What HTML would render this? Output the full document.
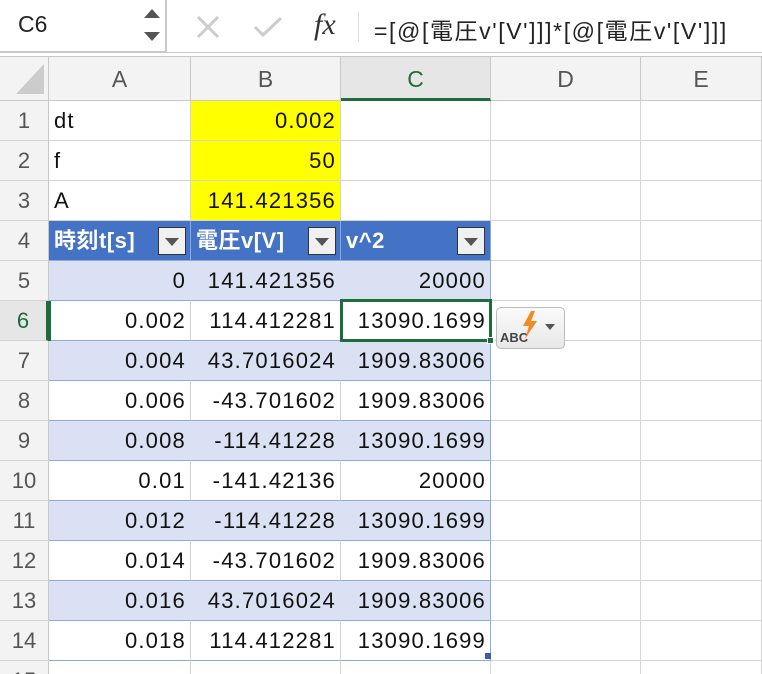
<!DOCTYPE html>
<html><head><meta charset="utf-8"><style>
*{box-sizing:border-box;margin:0;padding:0}
html,body{width:762px;height:674px;overflow:hidden}
body{background:#fff;font-family:"Liberation Sans","Noto Sans CJK JP",sans-serif;position:relative}
.a{position:absolute}
.c{position:absolute;height:40px;border-right:1px solid #d4d4d4;border-bottom:1px solid #d4d4d4;font-size:22px;letter-spacing:1.2px;line-height:40px;padding:0 4px 0 5px;white-space:nowrap;color:#111;overflow:visible}
.r{text-align:right}
.rh{position:absolute;left:0;width:49px;height:40px;border-right:1px solid #c8c8c8;border-bottom:1px solid #d4d4d4;background:#f3f3f3;color:#555;font-size:22px;line-height:40px;text-align:center}
.ch{position:absolute;top:57px;height:44px;border-right:1px solid #c8c8c8;border-bottom:1px solid #c8c8c8;background:#f3f3f3;color:#555;font-size:23px;line-height:44px;text-align:center}
.y{background:#ffff00}
.band{background:#d9e1f2}
.th{background:#4472c4;color:#fff;font-weight:bold;letter-spacing:0.5px}
.dd{position:absolute;top:6px;width:28px;height:28px;background:#f0f0f0;border:1px solid #333}
.dd:after{content:"";position:absolute;left:6px;top:10px;border-left:7px solid transparent;border-right:7px solid transparent;border-top:8px solid #555}
</style></head><body>
<div class="a" style="left:0;top:0;width:167px;height:52px;border-right:2px solid #c8c8c8;border-bottom:1px solid #c8c8c8"></div>
<div class="a" style="left:18px;top:11px;font-size:23px;color:#222">C6</div>
<div class="a" style="left:144px;top:9px;border-left:8px solid transparent;border-right:8px solid transparent;border-bottom:9px solid #555"></div>
<div class="a" style="left:144px;top:32px;border-left:8px solid transparent;border-right:8px solid transparent;border-top:9px solid #555"></div>
<svg class="a" style="left:195px;top:14px" width="30" height="26"><path d="M3 3L23 23M23 3L3 23" stroke="#ccc" stroke-width="3"/></svg>
<svg class="a" style="left:252px;top:14px" width="32" height="26"><path d="M3 13L11 21L29 4" stroke="#ccc" stroke-width="3" fill="none"/></svg>
<div class="a" style="left:314px;top:8px;font-family:'Liberation Serif',serif;font-style:italic;font-size:30px;color:#333">fx</div>
<div class="a" style="left:358px;top:12px;width:1px;height:30px;background:#ddd"></div>
<div class="a" style="left:374px;top:12px;font-size:23px;letter-spacing:1.6px;color:#222;white-space:nowrap">=[@[電圧v'[V']]]*[@[電圧v'[V']]]</div>
<div class="a" style="left:0;top:52px;width:762px;height:5px;border-top:1px solid #c8c8c8;border-bottom:1px solid #c8c8c8;background:#fff"></div>
<div class="ch" style="left:0;width:49px"></div>
<svg class="a" style="left:14px;top:62px" width="32" height="34"><path d="M30 2L30 32L2 32Z" fill="#ccc"/></svg>
<div class="ch" style="left:49px;width:142px">A</div>
<div class="ch" style="left:191px;width:150px">B</div>
<div class="ch" style="left:341px;width:150px;background:#e6e6e6;color:#1e6b3c;border-bottom:3px solid #1e6b3c">C</div>
<div class="ch" style="left:491px;width:150px">D</div>
<div class="ch" style="left:641px;width:121px">E</div>
<div id="g"></div>
<script>
var rows=[
["dt","0.002",""],["f","50",""],["A","141.421356",""],
["H","",""],
["0","141.421356","20000"],["0.002","114.412281","13090.1699"],["0.004","43.7016024","1909.83006"],
["0.006","-43.701602","1909.83006"],["0.008","-114.41228","13090.1699"],["0.01","-141.42136","20000"],
["0.012","-114.41228","13090.1699"],["0.014","-43.701602","1909.83006"],["0.016","43.7016024","1909.83006"],
["0.018","114.412281","13090.1699"],["","",""]];
var h="";
for(var i=0;i<15;i++){
 var t=101+40*i,n=i+1,d=rows[i];
 h+='<div class="rh" style="top:'+t+'px;'+(n==6?'color:#1e6b3c;background:#e6e6e6;border-right:3px solid #1e6b3c':'')+'">'+n+'</div>';
 if(n==4){
  h+='<div class="c th" style="left:49px;top:'+t+'px;width:142px;border-color:#8ea9db">時刻t[s]<div class="dd" style="left:109px"></div></div>';
  h+='<div class="c th" style="left:191px;top:'+t+'px;width:150px;border-color:#8ea9db">電圧v[V]<div class="dd" style="left:117px"></div></div>';
  h+='<div class="c th" style="left:341px;top:'+t+'px;width:150px;border-color:#8ea9db">v^2<div class="dd" style="left:116px"></div></div>';
 } else if(n<=3){
  h+='<div class="c" style="left:49px;top:'+t+'px;width:142px">'+d[0]+'</div>';
  h+='<div class="c r y" style="left:191px;top:'+t+'px;width:150px">'+d[1]+'</div>';
  h+='<div class="c r" style="left:341px;top:'+t+'px;width:150px">'+d[2]+'</div>';
 } else {
  var cls=(n>=5&&n<=14&&n%2==1)?' band':'';
  var bcol=(n>=5&&n<=14)?'border-bottom-color:#8ea9db;':'';
  var bcolB=(n>=5&&n<=14&&n%2==1)?'border-right-color:#d9e1f2;':'';
  h+='<div class="c r'+cls+'" style="left:49px;top:'+t+'px;width:142px;'+bcol+bcolB+'">'+d[0]+'</div>';
  h+='<div class="c r'+cls+'" style="left:191px;top:'+t+'px;width:150px;'+bcol+bcolB+'">'+d[1]+'</div>';
  h+='<div class="c r'+cls+'" style="left:341px;top:'+t+'px;width:150px;'+bcol+((n>=5&&n<=14)?'border-right-color:#8ea9db;':'')+'">'+d[2]+'</div>';
 }
 h+='<div class="c" style="left:491px;top:'+t+'px;width:150px"></div>';
 h+='<div class="c" style="left:641px;top:'+t+'px;width:121px"></div>';
}
document.getElementById('g').innerHTML=h;
</script>
<div class="a" style="left:340px;top:299px;width:152px;height:43px;border:3px solid #1e6b3c"></div>
<div class="a" style="left:487px;top:337px;width:7px;height:7px;background:#1e6b3c;border:1px solid #fff"></div>
<div class="a" style="left:48px;top:301px;width:3px;height:40px;background:#1e6b3c"></div>
<div class="a" style="left:485px;top:653px;width:6px;height:6px;background:#3b5bb0"></div>
<div class="a" style="left:496px;top:307px;width:69px;height:42px;border:1px solid #bbb;border-radius:5px;background:linear-gradient(#fafafa,#e8e8e8)"></div>
<div class="a" style="left:500px;top:330px;font-size:13px;color:#444;font-weight:bold">ABC</div>
<svg class="a" style="left:521px;top:310px" width="18" height="30"><path d="M10 1L2 16L8 16L4 29L16 11L10 11L14 1Z" fill="#f08a24"/></svg>
<div class="a" style="left:545px;top:324px;border-left:5px solid transparent;border-right:5px solid transparent;border-top:6px solid #555"></div>
</body></html>
